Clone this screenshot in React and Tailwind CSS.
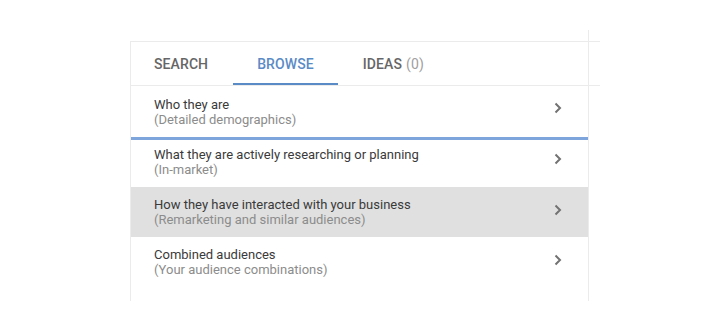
import React from "react";

function Chevron() {
  return (
    <svg width="8" height="12" viewBox="0 0 8 12" className="shrink-0">
      <path d="M1.5 1.5 L6 6 L1.5 10.5" fill="none" stroke="#727272" strokeWidth="2" />
    </svg>
  );
}

function Row({ title, sub, className = "", pt = "pt-[11px]", cm = "mt-[5px]" }) {
  return (
    <div className={`flex items-start pl-[23px] pr-[26px] ${pt} ${className}`}>
      <div className="flex-1 leading-[15px] text-[13px]">
        <div className="text-[#3a3a3a]">{title}</div>
        <div className="text-[#8c8c8c]">{sub}</div>
      </div>
      <div className={cm}>
        <Chevron />
      </div>
    </div>
  );
}

export default function App() {
  return (
    <div
      className="w-[720px] h-[317px] bg-white overflow-hidden pt-[30px] pl-[130px]"
      style={{ fontFamily: "Roboto, 'Liberation Sans', sans-serif" }}
    >
      <div className="w-[459px] h-[11px] border-r border-[#ebebeb]" />
      <div className="w-[470px] border-t border-b border-[#ebebeb]">
        <div className="w-[459px] h-[43px] border-x border-[#ebebeb] flex items-stretch text-[14px] font-medium tracking-[0.1px]">
          <div className="pl-[23px] pr-[25px] pt-[1px] flex items-center text-[#666666]">SEARCH</div>
          <div className="px-[24px] pt-[1px] flex items-center text-[#5b8bc6] relative">
            BROWSE
            <div className="absolute left-0 right-0 bottom-0 h-[2px] bg-[#5b8bc6]" />
          </div>
          <div className="px-[25px] pt-[1px] flex items-center text-[#666666]">
            IDEAS<span className="ml-[4px] text-[#a0a0a0] font-normal">(0)</span>
          </div>
        </div>
      </div>
      <div className="w-[459px] h-[215px] border-x border-[#ebebeb] flex flex-col">
        <Row title="Who they are" sub="(Detailed demographics)" className="h-[51px]" />
        <div className="h-[3px] bg-[#7ea5dc]" />
        <Row
          title="What they are actively researching or planning"
          sub="(In-market)"
          className="h-[47px]"
          pt="pt-[7px]"
          cm="mt-[6px]"
        />
        <Row
          title="How they have interacted with your business"
          sub="(Remarketing and similar audiences)"
          className="h-[50px] bg-[#e0e0e0]"
          pt="pt-[10px]"
          cm="mt-[7px]"
        />
        <Row
          title="Combined audiences"
          sub="(Your audience combinations)"
          className="h-[50px]"
          pt="pt-[10px]"
          cm="mt-[7px]"
        />
      </div>
    </div>
  );
}
